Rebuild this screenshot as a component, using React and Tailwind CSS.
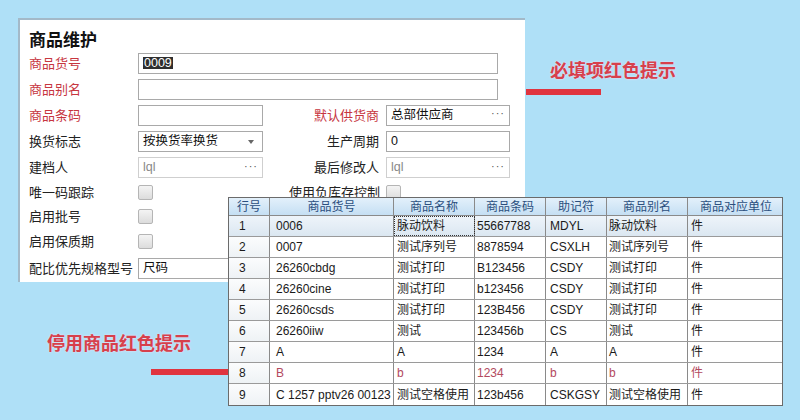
import React from "react";

const FONT = "font-['Liberation_Sans','Noto_Sans_CJK_SC',sans-serif]";

function Label({ children, red, className = "" }) {
  return (
    <div className={`text-[13px] leading-none whitespace-nowrap ${red ? "text-[#c7363f]" : "text-[#222]"} ${className}`}>
      {children}
    </div>
  );
}

function Box({ className = "", children }) {
  return (
    <div className={`h-[21px] border border-[#a9a9a9] bg-white flex items-center px-[4px] text-[12.5px] text-[#111] leading-none ${className}`}>
      {children}
    </div>
  );
}

function Dots() {
  return <span className="ml-auto text-[11px] text-[#555] tracking-[1px] leading-none pb-[3px]">···</span>;
}

function Check() {
  return (
    <div className="w-[15px] h-[15px] rounded-[2px] border border-[#b5b5b5] bg-gradient-to-b from-[#f4f4f4] to-[#dcdcdc]" />
  );
}

const cols = [
  { w: "w-[41px]", pad: "pl-[10px]", head: "行号" },
  { w: "w-[124px]", pad: "pl-[6px]", head: "商品货号" },
  { w: "w-[81px]", pad: "pl-[3px]", head: "商品名称" },
  { w: "w-[71px]", pad: "pl-[2px]", head: "商品条码" },
  { w: "w-[61px]", pad: "pl-[4px]", head: "助记符" },
  { w: "w-[81px]", pad: "pl-[2px]", head: "商品别名" },
  { w: "w-[96px]", pad: "pl-[3px]", head: "商品对应单位" },
];

const rows = [
  ["1", "0006", "脉动饮料", "55667788", "MDYL", "脉动饮料", "件"],
  ["2", "0007", "测试序列号", "8878594", "CSXLH", "测试序列号", "件"],
  ["3", "26260cbdg", "测试打印", "B123456", "CSDY", "测试打印", "件"],
  ["4", "26260cine", "测试打印", "b123456", "CSDY", "测试打印", "件"],
  ["5", "26260csds", "测试打印", "123B456", "CSDY", "测试打印", "件"],
  ["6", "26260iiw", "测试", "123456b", "CS", "测试", "件"],
  ["7", "A", "A", "1234", "A", "A", "件"],
  ["8", "B", "b", "1234", "b", "b", "件"],
  ["9", "C 1257 pptv26 00123", "测试空格使用", "123b456", "CSKGSY", "测试空格使用", "件"],
];

function Grid() {
  return (
    <div className="absolute left-[228px] top-[197px] w-[555px] border border-[#6b6b6b] bg-white">
      <div className="flex h-[18px] bg-gradient-to-b from-[#e3f0fb] to-[#c5dff3] border-b border-[#8a8a8a]">
        {cols.map((c, i) => (
          <div
            key={i}
            className={`${c.w} shrink-0 flex items-center justify-center text-[12px] text-[#2b4f7e] leading-none ${i < cols.length - 1 ? "border-r border-[#8a8a8a]" : ""}`}
          >
            {c.head}
          </div>
        ))}
      </div>
      {rows.map((r, ri) => (
        <div
          key={ri}
          className={`flex h-[21px] ${ri < rows.length - 1 ? "border-b border-[#9a9a9a]" : ""} ${ri === 0 ? "bg-gradient-to-b from-[#eef4fa] to-[#dbe7f1]" : "bg-white"}`}
        >
          {r.map((v, ci) => (
            <div
              key={ci}
              className={`${cols[ci].w} ${cols[ci].pad} shrink-0 flex items-center text-[12px] leading-none whitespace-nowrap overflow-hidden ${ci < cols.length - 1 ? "border-r border-[#8a8a8a]" : ""} ${ri === 7 && ci > 0 ? "text-[#b34a5e]" : "text-[#1a1a1a]"} ${ci === 0 && ri !== 0 ? "bg-gradient-to-b from-[#fbfcfd] to-[#eef2f5]" : ""} ${ri === 0 && ci === 2 ? "outline outline-1 outline-dotted outline-[#333] -outline-offset-1" : ""}`}
            >
              {v}
            </div>
          ))}
        </div>
      ))}
    </div>
  );
}

export default function App() {
  return (
    <div className={`relative w-[800px] h-[420px] overflow-hidden bg-[#afe0f7] ${FONT}`}>
      <div className="ml-[18px] pt-[18px]">
        <div className="w-[507px] h-[264px] bg-white border-t-2 border-l-2 border-[#a3b9c8] pl-[9px] pt-[11px]">
          <div className="h-[19px] text-[17px] font-bold text-[#111] leading-none flex items-center">商品维护</div>
          <div className="flex flex-col">
            <div className="flex items-center h-[26px]">
              <Label red className="w-[109px]">商品货号</Label>
              <Box className="w-[360px] bg-[#dde9f1]">
                <span className="bg-[#2f2f2f] text-white px-[1px]">0009</span>
              </Box>
            </div>
            <div className="flex items-center h-[26px]">
              <Label red className="w-[109px]">商品别名</Label>
              <Box className="w-[360px]" />
            </div>
            <div className="flex items-center h-[26px]">
              <Label red className="w-[109px]">商品条码</Label>
              <Box className="w-[125px]" />
              <Label red className="w-[123px] text-right pr-[7px]">默认供货商</Label>
              <Box className="w-[124px]">
                总部供应商
                <Dots />
              </Box>
            </div>
            <div className="flex items-center h-[27px]">
              <Label className="w-[109px]">换货标志</Label>
              <Box className="w-[125px]">
                按换货率换货
                <span className="ml-auto mr-[4px] w-0 h-0 border-l-[3px] border-r-[3px] border-t-[4px] border-l-transparent border-r-transparent border-t-[#666]" />
              </Box>
              <Label className="w-[123px] text-right pr-[7px]">生产周期</Label>
              <Box className="w-[124px]">0</Box>
            </div>
            <div className="flex items-center h-[25px]">
              <Label className="w-[109px]">建档人</Label>
              <Box className="w-[125px] border-[#cfcfcf] text-[#888]">
                lql
                <Dots />
              </Box>
              <Label className="w-[123px] text-right pr-[7px]">最后修改人</Label>
              <Box className="w-[124px] border-[#cfcfcf] text-[#888]">
                lql
                <Dots />
              </Box>
            </div>
            <div className="flex items-center h-[24px]">
              <Label className="w-[109px]">唯一码跟踪</Label>
              <Check />
              <Label className="w-[233px] text-right pr-[6px]">使用负库存控制</Label>
              <Check />
            </div>
            <div className="flex items-center h-[24px]">
              <Label className="w-[109px]">启用批号</Label>
              <Check />
            </div>
            <div className="flex items-center h-[26px]">
              <Label className="w-[109px]">启用保质期</Label>
              <Check />
            </div>
            <div className="flex items-center h-[28px]">
              <Label className="w-[109px]">配比优先规格型号</Label>
              <Box className="w-[360px]">尺码</Box>
            </div>
          </div>
        </div>
      </div>

      <div className="absolute left-[550px] top-[62px] text-[18px] font-bold text-[#d6404c] leading-none [text-shadow:0_0_2px_#fde]">
        必填项红色提示
      </div>
      <div className="absolute left-[526px] top-[89px] w-[75px] h-[6px] bg-[#e0343f]" />

      <div className="absolute left-[47px] top-[335px] text-[18px] font-bold text-[#d6404c] leading-none [text-shadow:0_0_2px_#fde]">
        停用商品红色提示
      </div>
      <div className="absolute left-[151px] top-[369px] w-[77px] h-[6px] bg-[#e0343f]" />

      <Grid />
    </div>
  );
}
